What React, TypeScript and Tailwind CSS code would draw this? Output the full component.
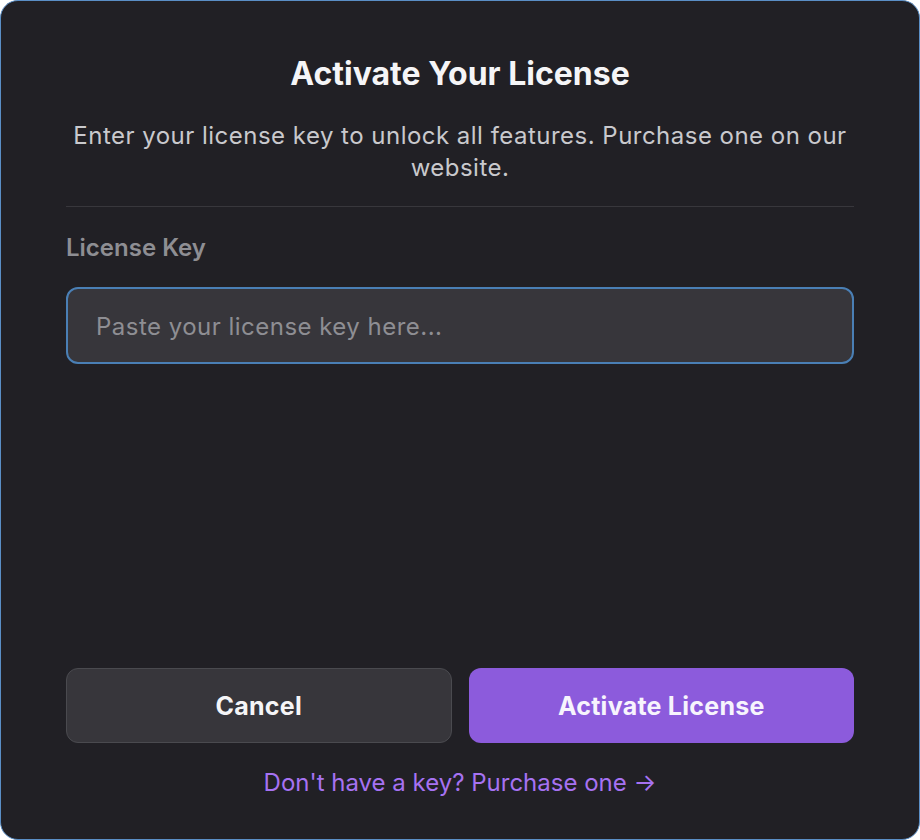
import { useState } from "react";

export default function App() {
  const [key, setKey] = useState("");

  return (
    <div className="w-[920px] h-[840px] bg-white" style={{ fontFamily: "Inter, 'Noto Sans', sans-serif" }}>
      <div className="flex h-full flex-col rounded-[18px] border border-[#5a8ec6] bg-[#212025] px-[65px] pt-[53px] pb-[42px]">
        {/* ---------- Header ---------- */}
        <h1 className="text-center text-[32px] font-bold leading-[40px] text-[#f5f5f7]">
          Activate Your License
        </h1>
        <p className="mt-[26px] text-center text-[24px] leading-[32px] tracking-[0.02em] text-[#c9c9cd]">
          Enter your license key to unlock all features. Purchase one on our website.
        </p>

        <div className="mt-[22px] h-px bg-[#38373c]" />

        {/* ---------- Field ---------- */}
        <label className="mt-[27px] text-[24px] font-semibold leading-[28px] text-[#8e8e93]">
          License Key
        </label>
        <input
          value={key}
          onChange={(e) => setKey(e.target.value)}
          placeholder="Paste your license key here..."
          className="mt-[25px] h-[77px] w-full rounded-[12px] border-2 border-[#4a7fb5] bg-[#37363b] px-[28px] pt-[2px] text-[24px] tracking-[0.02em] text-white outline-none placeholder:text-[#8e8e93]"
        />

        <div className="flex-1" />

        {/* ---------- Actions ---------- */}
        <div className="grid grid-cols-2 gap-[17px]">
          <button className="h-[75px] rounded-[12px] border border-[#4a4a4f] bg-[#37363b] pt-[3px] text-[25px] font-bold tracking-[0.01em] text-[#f5f5f7]">
            Cancel
          </button>
          <button className="h-[75px] rounded-[12px] bg-[#8c5bdc] pt-[3px] text-[25px] font-bold tracking-[0.01em] text-[#f7f4fd]">
            Activate License
          </button>
        </div>

        <a className="mt-[26px] text-center text-[24px] leading-[28px] text-[#a672f2]">
          Don't have a key? Purchase one →
        </a>
      </div>
    </div>
  );
}
